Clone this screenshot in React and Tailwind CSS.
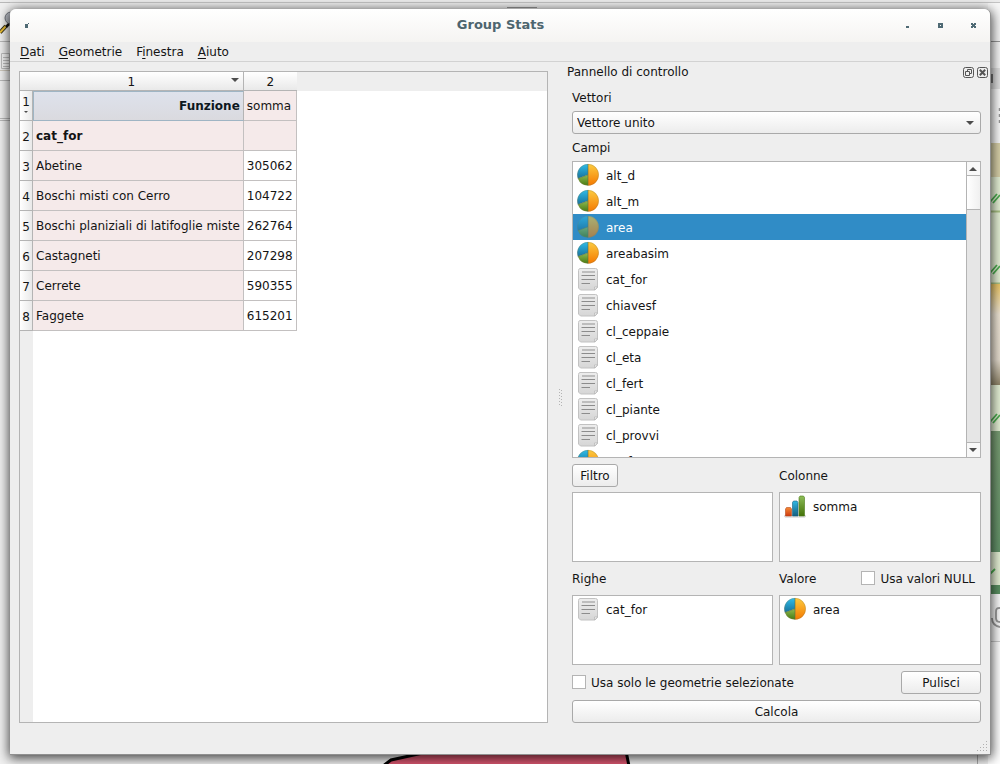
import { useState } from 'react';

const FIELDS = [
  { name: 'alt_d', type: 'number' },
  { name: 'alt_m', type: 'number' },
  { name: 'area', type: 'number' },
  { name: 'areabasim', type: 'number' },
  { name: 'cat_for', type: 'text' },
  { name: 'chiavesf', type: 'text' },
  { name: 'cl_ceppaie', type: 'text' },
  { name: 'cl_eta', type: 'text' },
  { name: 'cl_fert', type: 'text' },
  { name: 'cl_piante', type: 'text' },
  { name: 'cl_provvi', type: 'text' },
  { name: 'conf', type: 'number' },
];

const ROWS = [
  ['Abetine', 305062],
  ['Boschi misti con Cerro', 104722],
  ['Boschi planiziali di latifoglie miste', 262764],
  ['Castagneti', 207298],
  ['Cerrete', 590355],
  ['Faggete', 615201],
];

const MENUS = [
  ['', 'D', 'ati'],
  ['', 'G', 'eometrie'],
  ['F', 'i', 'nestra'],
  ['', 'A', 'iuto'],
];

const raised = 'rounded-[3px] border border-[#a9a9a9] bg-linear-to-b from-white to-[#ececec] pt-px';

function PieIcon() {
  return (
    <svg width="24" height="24" viewBox="0 0 24 24" aria-hidden="true">
      <defs>
        <linearGradient id="pieOrange" x1="0" y1="0" x2="0" y2="1">
          <stop offset="0" stopColor="#fccb3f" />
          <stop offset="1" stopColor="#f57900" />
        </linearGradient>
        <linearGradient id="pieBlue" x1="0" y1="0" x2="0" y2="1">
          <stop offset="0" stopColor="#2fbdea" />
          <stop offset="1" stopColor="#17719b" />
        </linearGradient>
        <linearGradient id="pieGreen" x1="0" y1="0" x2="0" y2="1">
          <stop offset="0" stopColor="#8fbb50" />
          <stop offset="1" stopColor="#477a12" />
        </linearGradient>
      </defs>
      <path d="M12 1a10.800 10.800 0 0 1 0 21.600z" fill="url(#pieOrange)" />
      <path d="M12 11.800L1.900 15.600A10.800 10.800 0 0 1 12 1z" fill="url(#pieBlue)" />
      <path d="M12 11.800V22.600A10.800 10.800 0 0 1 1.900 15.600z" fill="url(#pieGreen)" />
      <path d="M12 1v21.600M12 11.800L1.900 15.600" stroke="#5b6b45" strokeWidth=".6" fill="none" />
      <circle cx="12" cy="11.800" r="10.500" fill="none" stroke="#8a7a4a" strokeOpacity=".5" strokeWidth=".6" />
    </svg>
  );
}

function PageIcon() {
  return (
    <svg width="24" height="24" viewBox="0 0 24 24" aria-hidden="true">
      <defs>
        <linearGradient id="page" x1="0" y1="0" x2="0" y2="1">
          <stop offset="0" stopColor="#ededed" />
          <stop offset="1" stopColor="#d6d6d6" />
        </linearGradient>
      </defs>
      <path d="M4 1.500h15.500a2 2 0 0 1 2 2V20.500l-2.500 2.500H4.500l-2-2V3.500A2 2 0 0 1 4 1.500z" fill="url(#page)" stroke="#c2c2c2" />
      <path d="M18.500 23v-3H21.500z" fill="#fafafa" stroke="#b5b5b5" strokeWidth=".7" />
      <path d="M6 5h13" stroke="#bdbdbd" strokeWidth="2" />
      <path d="M5.500 8.500h13.500M5.500 12.500h13.500M5.500 16.500h8.500" stroke="#8c8c8c" />
    </svg>
  );
}

function BarsIcon() {
  return (
    <svg width="24" height="24" viewBox="0 0 24 24" aria-hidden="true">
      <defs>
        <linearGradient id="barRed" x1="0" y1="0" x2="0" y2="1">
          <stop offset="0" stopColor="#f58b35" />
          <stop offset="1" stopColor="#cf3a10" />
        </linearGradient>
        <linearGradient id="barBlue" x1="0" y1="0" x2="0" y2="1">
          <stop offset="0" stopColor="#2fb8e4" />
          <stop offset="1" stopColor="#155f80" />
        </linearGradient>
        <linearGradient id="barGreen" x1="0" y1="0" x2="0" y2="1">
          <stop offset="0" stopColor="#8dbd58" />
          <stop offset="1" stopColor="#447208" />
        </linearGradient>
      </defs>
      <rect x="1.500" y="21" width="21" height="2.200" rx="1" fill="#e6e6e6" stroke="#bcbcbc" strokeWidth=".5" />
      <path d="M2.500 22v-7l1-1.500h4l1 1.500v7z" fill="url(#barRed)" stroke="#b5481c" strokeWidth=".6" />
      <path d="M9.500 22V8.500l1-1.500h3.500l1 1.500V22z" fill="url(#barBlue)" stroke="#155f80" strokeWidth=".6" />
      <path d="M16 22V3.500L17 2h3.500l1 1.500V22z" fill="url(#barGreen)" stroke="#4c7a17" strokeWidth=".6" />
    </svg>
  );
}

function Arrow({ up = false }) {
  return (
    <svg width="8" height="4" viewBox="0 0 8 4" aria-hidden="true">
      <path d={up ? 'M0 4L4 0l4 4z' : 'M0 0h8L4 4z'} fill="#4c4c4c" />
    </svg>
  );
}

function ItemIcon({ type }) {
  if (type === 'bars') return <BarsIcon />;
  return type === 'number' ? <PieIcon /> : <PageIcon />;
}

function Item({ name, type, selected, onClick }) {
  return (
    <li
      onClick={onClick}
      className={`flex h-[26px] shrink-0 items-center gap-[6px] pl-[3px] ${selected ? 'bg-[#308cc6] text-white' : ''}`}
    >
      <span className={selected ? 'opacity-60' : ''}>
        <ItemIcon type={type} />
      </span>
      <span className="pt-[2px]">{name}</span>
    </li>
  );
}

function DropBox({ label, items = [] }) {
  return (
    <ul aria-label={label} className="h-[70px] border border-[#b4b4b4] bg-white">
      {items.map((item) => (
        <Item key={item.name} {...item} />
      ))}
    </ul>
  );
}

function CheckBox({ label }) {
  return (
    <label className="flex h-[22px] items-center gap-[5px] self-start">
      <input type="checkbox" className="size-[14px] appearance-none border border-[#b4b4b4] bg-white checked:bg-[#308cc6]" />
      <span className="pt-[2px]">{label}</span>
    </label>
  );
}

// What shows of the map application behind the window
function Backdrop() {
  return (
    <div className="absolute inset-0 overflow-hidden bg-[#f0f0f0]" aria-hidden="true">
      <svg className="absolute top-0 left-0" width="10" height="764" viewBox="0 0 10 764">
        <path d="M0 2.500h10M0 41.500h10M0 80.500h10M0 118.500h10M0 120.500h10" stroke="#b9b9b9" />
        <path d="M0 70.500h10" stroke="#cfc9bd" />
        <circle cx="11" cy="18" r="6" fill="#b8bcc4" stroke="#70747c" />
        <path d="M0 32.500l6-6.500" stroke="#2e2a18" strokeWidth="4" />
        <path d="M0 32.500l6-6.500" stroke="#e8bd35" strokeWidth="2" />
        <path d="M6 27l3-3" stroke="#111" strokeWidth="2.500" />
        <path d="M1.500 53.500h8v15h-8zM3 57.500h6M3 60.500h6M3 63.500h6M3 66.500h6" fill="#f5f5f5" stroke="#bdbdbd" />
      </svg>
      <div className="h-[3px] border-b border-[#c4c4c4] bg-[#ececec]" />
      <svg className="absolute top-0 left-[507px]" width="30" height="9" viewBox="0 0 30 9">
        <path d="M0 7.500h30" stroke="#999" />
      </svg>
      <svg className="absolute top-0 right-0" width="12" height="764" viewBox="0 0 12 764">
        <defs>
          <linearGradient id="photo" x1="0" y1="0" x2="0" y2="1">
            <stop offset="0" stopColor="#edc766" />
            <stop offset=".3" stopColor="#efe6d6" />
            <stop offset=".75" stopColor="#e6ddcf" />
            <stop offset="1" stopColor="#8f8468" />
          </linearGradient>
          <linearGradient id="wood" x1="0" y1="0" x2="0" y2="1">
            <stop offset="0" stopColor="#7a9e74" />
            <stop offset="1" stopColor="#64936a" />
          </linearGradient>
        </defs>
        <path d="M0 3h12v65H0z" fill="#f7f7f7" />
        <path d="M0 41.500h12" stroke="#999" />
        <path d="M0 68h12v21H0z" fill="#e1e1e1" />
        <path d="M0 74h5v9H0z" fill="#777" />
        <path d="M0 89h12v54H0z" fill="#fafafa" />
        <path d="M11.500 108v3M11.500 114v3M11.500 120v3" stroke="#999" strokeWidth="1.500" />
        <path d="M0 143h12v34H0z" fill="#d8d0a8" />
        <path d="M0 177h12v106H0z" fill="#e5f0d5" />
        <path d="M0 211.500h12M0 283.500h12" stroke="#a9c184" strokeWidth="2" />
        <path d="M0 284h12v101H0z" fill="url(#photo)" />
        <path d="M0 385h12v46H0z" fill="#e5f0d5" />
        <path d="M0 431h12v121H0z" fill="url(#wood)" />
        <path d="M0 552h12v33H0z" fill="#e5f0d5" />
        <path d="M0 585h12v9H0z" fill="#5b9163" />
        <path d="M2 202l7-8M5 203l7-8M2 273l7-8M5 274l7-8M2 422l7-8M5 423l7-8M2 574l5-5" stroke="#4caf50" strokeWidth="1.800" />
        <path d="M0 594h12v47H0z" fill="#fafafa" />
        <path d="M4 618c0 6 3 8 8 9M12 608h-1c-3 0-3 2-3 5v5c0 3 1 4 4 4" fill="none" stroke="#999" strokeWidth="1.800" />
        <path d="M0 641.500h12" stroke="#ccc" />
        <path d="M0 642h12v122H0z" fill="#fff" />
      </svg>
      <svg className="absolute bottom-0 left-[380px]" width="600" height="10" viewBox="0 0 600 10">
        <path d="M3 12l8-6L52-3H246l3 15z" fill="#d9566f" stroke="#000" strokeWidth="3" />
        <path d="M597.500 0v10" stroke="#aaa" />
      </svg>
    </div>
  );
}

function TitleBar() {
  return (
    <header className="grid h-[33px] grid-cols-[1fr_auto_1fr] items-center rounded-t-[6px] bg-linear-to-b from-white to-[#f5f4f2] pr-[14px] pl-[15px]">
      <svg width="5" height="5" viewBox="0 0 5 5" aria-hidden="true">
        <path d="M0 1h3v4H0zM3 0h1v1H3z" fill="#4f6a74" />
      </svg>
      <h1 className="pb-[2px] text-[13px] font-bold text-[#4d656f]">Group Stats</h1>
      <div className="flex justify-end gap-[28px]">
        <button aria-label="Riduci a icona" className="flex size-[5px]">
          <svg width="5" height="5" viewBox="0 0 5 5">
            <path d="M1 3h3v2H1z" fill="#4f6a74" />
          </svg>
        </button>
        <button aria-label="Ingrandisci" className="flex size-[5px]">
          <svg width="5" height="5" viewBox="0 0 5 5">
            <path d="M0 0h5v5H0zM2 2v1h1V2z" fillRule="evenodd" fill="#4f6a74" />
          </svg>
        </button>
        <button aria-label="Chiudi" className="flex size-[5px]">
          <svg width="5" height="5" viewBox="0 0 5 5">
            <path d="M0 0h2v1h1V0h2v2H4v1h1v2H3V4H2v1H0V3h1V2H0z" fill="#4f6a74" />
          </svg>
        </button>
      </div>
    </header>
  );
}

function ResultTable() {
  const head = 'border-b border-[#b4b4b4] bg-linear-to-b from-white to-[#e9e9e9] px-0 pt-[2px] pb-0 font-normal';
  const side = 'border-r border-b border-[#b4b4b4] bg-linear-to-r from-white to-[#e9e9e9] px-0 pb-0 text-center font-normal';
  const cell = 'border-r border-b border-[#c3c0c0] px-[3px] py-0';
  const pink = `${cell} bg-[#f5eaea]`;
  return (
    <div className="flex min-w-0 flex-1 flex-col border border-[#b4b4b4] bg-white">
      <table className="w-full border-separate border-spacing-0 leading-[16px] whitespace-nowrap">
        <thead>
          <tr className="h-[19px]">
            <th colSpan={2} className={`${head} border-r`}>
              <span className="grid grid-cols-[1fr_auto_1fr]">
                <span />
                1
                <span className="flex items-start justify-end pt-[4px] pr-[4px]">
                  <Arrow />
                </span>
              </span>
            </th>
            <th className={head}>2</th>
            <th className="w-full bg-[#eee]" />
          </tr>
        </thead>
        <tbody>
          <tr className="h-[30px]">
            <th className={`${side} pt-[3px] align-top`}>
              <span className="flex min-w-[12px] flex-col items-center gap-px">
                1
                <svg width="4" height="2" viewBox="0 0 4 2" aria-hidden="true">
                  <path d="M0 0h4L2 2z" fill="#4c4c4c" />
                </svg>
              </span>
            </th>
            <td className="border border-t-[#9fb5c4] border-r-[#b4b4b4] border-b-[#9fb5c4] border-l-[#9fb5c4] bg-linear-to-b from-[#dee2ec] to-[#dadadf] px-[3px] py-0 text-right font-bold text-[#0c1720]">
              Funzione
            </td>
            <td className={pink}>somma</td>
            <td />
          </tr>
          <tr className="h-[30px]">
            <th className={`${side} pt-[2px]`}>2</th>
            <td className={`${pink} font-bold`}>cat_for</td>
            <td className={pink} />
            <td />
          </tr>
          {ROWS.map(([name, total], i) => (
            <tr key={name} className="h-[30px]">
              <th className={`${side} pt-[2px]`}>{i + 3}</th>
              <td className={pink}>{name}</td>
              <td className={cell}>{total}</td>
              <td />
            </tr>
          ))}
        </tbody>
      </table>
      <div className="w-[13px] flex-1 bg-[#eee]" />
    </div>
  );
}

function FieldList() {
  const [selected, setSelected] = useState('area');
  return (
    <div className="flex min-h-0 flex-1 border border-[#b4b4b4] bg-white">
      <ul aria-label="Campi" className="flex h-0 min-h-full flex-1 flex-col overflow-hidden">
        {FIELDS.map((field) => (
          <Item
            key={field.name}
            {...field}
            selected={field.name === selected}
            onClick={() => setSelected(field.name)}
          />
        ))}
      </ul>
      <div className="flex w-[14px] flex-col border-l border-[#b4b4b4] bg-[#e6e6e6]">
        <button aria-label="Su" className="flex h-[14px] items-center justify-center border-b border-[#b4b4b4] bg-[#f8f8f8] pr-px">
          <Arrow up />
        </button>
        <div className="h-[34px] border-b border-[#b4b4b4] bg-linear-to-r from-white to-[#f0f0f0]" />
        <div className="flex-1" />
        <button aria-label="Giù" className="flex h-[15px] items-center justify-center border-t border-[#b4b4b4] bg-[#f8f8f8] pr-px">
          <Arrow />
        </button>
      </div>
    </div>
  );
}

function ControlPanel() {
  return (
    <aside className="flex w-[425px] shrink-0 flex-col">
      <div className="flex h-[20px] items-center justify-between pr-[2px] pl-[2px]">
        <h2>Pannello di controllo</h2>
        <div className="flex gap-[3px]">
          <button aria-label="Stacca" className="flex">
            <svg width="11" height="11" viewBox="0 0 11 11" fill="none" stroke="#555">
              <rect x=".5" y=".5" width="10" height="10" rx="2" />
              <path d="M4.500 4V2.500h4v4H7M2.500 4.500h4v4h-4z" />
            </svg>
          </button>
          <button aria-label="Chiudi pannello" className="flex">
            <svg width="11" height="11" viewBox="0 0 11 11" fill="none" stroke="#555">
              <rect x=".5" y=".5" width="10" height="10" rx="2" />
              <path d="M2.800 2.800l5.400 5.400M8.200 2.800L2.800 8.200" strokeWidth="2" />
            </svg>
          </button>
        </div>
      </div>

      <div className="flex flex-1 flex-col gap-[6px] pt-[6px] pr-[9px] pl-[7px]">
        <div className="flex flex-1 flex-col gap-[4px]">
          <label htmlFor="vettori" className="pt-px">Vettori</label>
          <div className="relative">
            <select id="vettori" className={`block h-[23px] w-full appearance-none px-[4px] ${raised}`}>
              <option>Vettore unito</option>
            </select>
            <span className="pointer-events-none absolute inset-y-0 right-[7px] flex items-center">
              <Arrow />
            </span>
          </div>
          <h3 className="pt-px">Campi</h3>
          <FieldList />
        </div>

        <div className="grid grid-cols-[201fr_202fr] gap-x-[6px] gap-y-[5px]">
          <div className="flex h-[23px] items-center">
            <button className={`h-[23px] w-[46px] ${raised}`}>Filtro</button>
          </div>
          <h3 className="flex items-center">Colonne</h3>
          <DropBox label="Filtro" />
          <DropBox label="Colonne" items={[{ name: 'somma', type: 'bars' }]} />
          <h3 className="flex h-[23px] items-center">Righe</h3>
          <div className="flex items-center justify-between pr-[6px]">
            <h3>Valore</h3>
            <CheckBox label="Usa valori NULL" />
          </div>
          <DropBox label="Righe" items={[{ name: 'cat_for', type: 'text' }]} />
          <DropBox label="Valore" items={[{ name: 'area', type: 'number' }]} />
        </div>

        <div className="flex items-center justify-between">
          <CheckBox label="Usa solo le geometrie selezionate" />
          <button className={`h-[23px] w-[80px] ${raised}`}>Pulisci</button>
        </div>
        <button className={`h-[23px] ${raised}`}>Calcola</button>
      </div>
    </aside>
  );
}

export default function App() {
  return (
    <div className="relative flex min-h-screen pt-[9px] pr-[9px] pb-[9px] pl-[10px] font-['DejaVu_Sans',sans-serif] text-[12px] leading-[18px] text-[#141414]">
      <Backdrop />
      <main className="relative flex min-w-0 flex-1 flex-col rounded-t-[6px] border-r border-b border-[#8f8f8f] bg-[#eee] shadow-[0_2px_12px_1px_rgba(0,0,0,0.75)]">
        <TitleBar />
        <nav className="flex h-[20px] items-center gap-[14px] border-b border-[#d2d2d2] pt-px pl-[10px]">
          {MENUS.map(([before, key, after]) => (
            <button key={key}>
              {before}
              <u className="underline-offset-2">{key}</u>
              {after}
            </button>
          ))}
        </nav>

        <div className="flex flex-1 pl-[9px]">
          <div className="flex min-w-0 flex-1 pt-[9px]">
            <ResultTable />
          </div>
          <div className="flex w-[17px] items-center justify-center pt-[9px] pl-[7px]">
            <svg width="3" height="17" viewBox="0 0 3 17" aria-hidden="true">
              <path d="M.5 0v17M2.500 1v16" stroke="#b4b4b4" strokeDasharray="1 2" />
            </svg>
          </div>
          <ControlPanel />
        </div>

        <footer className="flex h-[31px] items-end justify-end p-[2px]">
          <svg width="11" height="11" viewBox="0 0 11 11" fill="#b0b0b0" aria-hidden="true">
            <path d="M9 0h1v1H9zM9 3h1v1H9zM6 3h1v1H6zM9 6h1v1H9zM6 6h1v1H6zM3 6h1v1H3zM9 9h1v1H9zM6 9h1v1H6zM3 9h1v1H3zM0 9h1v1H0z" />
          </svg>
        </footer>
      </main>
    </div>
  );
}
